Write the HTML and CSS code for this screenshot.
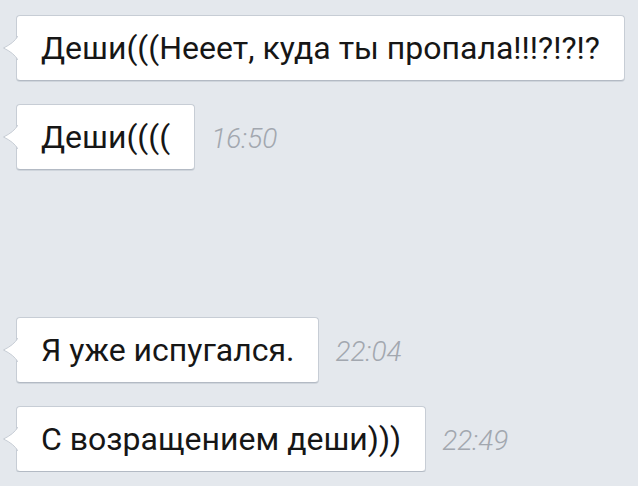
FILE: index.html
```html
<!DOCTYPE html>
<html lang="ru">
<head>
  <meta charset="utf-8">
  <title>Сообщения</title>
  <link rel="stylesheet" href="styles.css">
</head>
<body>
  <div class="chat">
    <div class="row">
      <div class="bubble">
        <svg class="tail" width="16" height="26" viewBox="0 0 16 26"><path d="M16 1 Q12 8 1.5 13 Q12 18 16 25" fill="#fff" stroke="#c7cdd5" stroke-width="1"/></svg>
        Деши(((Нееет, куда ты пропала!!!?!?!?
      </div>
    </div>
    <div class="row">
      <div class="bubble">
        <svg class="tail" width="16" height="26" viewBox="0 0 16 26"><path d="M16 1 Q12 8 1.5 13 Q12 18 16 25" fill="#fff" stroke="#c7cdd5" stroke-width="1"/></svg>
        Деши((((
      </div>
      <span class="time">16:50</span>
    </div>
    <div class="row later">
      <div class="bubble">
        <svg class="tail" width="16" height="26" viewBox="0 0 16 26"><path d="M16 1 Q12 8 1.5 13 Q12 18 16 25" fill="#fff" stroke="#c7cdd5" stroke-width="1"/></svg>
        Я уже испугался.
      </div>
      <span class="time">22:04</span>
    </div>
    <div class="row">
      <div class="bubble">
        <svg class="tail" width="16" height="26" viewBox="0 0 16 26"><path d="M16 1 Q12 8 1.5 13 Q12 18 16 25" fill="#fff" stroke="#c7cdd5" stroke-width="1"/></svg>
        С возращением деши)))
      </div>
      <span class="time">22:49</span>
    </div>
  </div>
</body>
</html>
```

FILE: styles.css
```css
body {
  margin: 0;
  background: #e4e8ed;
  font-family: Roboto, "Noto Sans", sans-serif;
}
.chat {
  display: flex;
  flex-direction: column;
  gap: 23px;
  padding: 15px 0 0 16px;
}
.row {
  display: flex;
  align-items: baseline;
  gap: 16px;
}
.row.later {
  margin-top: 124px;
}
.bubble {
  position: relative;
  background: #fff;
  border: 1px solid #c7cdd5;
  border-bottom-color: #b3bac4;
  border-radius: 4px;
  box-shadow: 0 1px 0 #cfd5dc;
  padding: 0 24px 0 24px;
  font-size: 32px;
  line-height: 64px;
  color: #161616;
  white-space: nowrap;
}
.tail {
  position: absolute;
  left: -15px;
  top: 50%;
  margin-top: -13px;
  display: block;
}
.time {
  font-size: 28px;
  font-weight: 300;
  font-style: italic;
  color: #a2a7af;
}
```
